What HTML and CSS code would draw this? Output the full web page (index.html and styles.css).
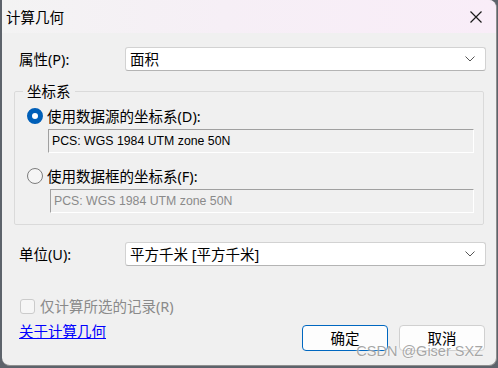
FILE: index.html
```html
<!DOCTYPE html>
<html lang="zh-CN">
<head>
    <meta charset="UTF-8">
    <title>计算几何</title>
    <link rel="stylesheet" href="styles.css">
</head>
<body>

    <div class="window">
        <div class="titlebar">
            <span class="title">计算几何</span>
            <svg class="close" width="12" height="12" viewBox="0 0 12 12">
                <path d="M0.5 0.5 L11.5 11.5 M11.5 0.5 L0.5 11.5" stroke="#1a1a1a" stroke-width="1.2" fill="none"/>
            </svg>
        </div>

        <div class="content">
            <div class="row first">
                <label class="label">属性(P):</label>
                <div class="select">
                    <span>面积</span>
                    <svg class="chevron" width="10" height="6" viewBox="0 0 10 6">
                        <path d="M0.5 0.5 L5 5 L9.5 0.5" stroke="#555" stroke-width="1" fill="none"/>
                    </svg>
                </div>
            </div>

            <fieldset class="group">
                <legend>坐标系</legend>
                <div class="radio-row top">
                    <span class="radio checked"></span>
                    <span>使用数据源的坐标系(D):</span>
                </div>
                <div class="textbox">PCS: WGS 1984 UTM zone 50N</div>

                <div class="radio-row second">
                    <span class="radio"></span>
                    <span>使用数据框的坐标系(F):</span>
                </div>
                <div class="textbox disabled">PCS: WGS 1984 UTM zone 50N</div>
            </fieldset>

            <div class="row units">
                <label class="label">单位(U):</label>
                <div class="select">
                    <span>平方千米 [平方千米]</span>
                    <svg class="chevron" width="10" height="6" viewBox="0 0 10 6">
                        <path d="M0.5 0.5 L5 5 L9.5 0.5" stroke="#555" stroke-width="1" fill="none"/>
                    </svg>
                </div>
            </div>

            <div class="footer">
                <div class="footer-left">
                    <div class="check-row">
                        <span class="checkbox"></span>
                        <span>仅计算所选的记录(R)</span>
                    </div>
                    <a class="link" href="#">关于计算几何</a>
                </div>
                <div class="buttons">
                    <button class="btn primary">确定</button>
                    <button class="btn">取消</button>
                </div>
            </div>
        </div>

        <div class="watermark">CSDN @Giser SXZ</div>
    </div>

</body>
</html>
```

FILE: styles.css
```css
body {
    margin: 0;
    padding: 0;
    background-color: #5d636b;
    font-family: "Noto Sans", "Noto Sans CJK SC", sans-serif;
    font-size: 14.5px;
    color: #000;
}
.window {
    position: relative;
    box-sizing: border-box;
    margin-left: 2px;
    width: 495px;
    height: 366px;
    background-color: #f0f0f0;
    border-right: 1px solid #8f8f8f;
    border-bottom: 1px solid #8f8f8f;
    border-radius: 0 8px 8px 8px;
    overflow: hidden;
}
.titlebar {
    display: flex;
    align-items: center;
    justify-content: space-between;
    height: 33px;
    padding: 0 14px 0 4px;
    background: linear-gradient(90deg, #f3f3f3 0%, #f6eff6 45%, #f9edf8 100%);
}
.title {
    line-height: 20px;
}
.content {
    padding: 0 10px 0 12px;
}
.row {
    display: flex;
    align-items: center;
    margin-left: 5px;
    height: 24px;
}
.row.first {
    margin-top: 14px;
}
.row.units {
    margin-top: 17px;
}
.label {
    width: 106px;
    line-height: 20px;
}
.select {
    flex: 1;
    box-sizing: border-box;
    height: 24px;
    display: flex;
    align-items: center;
    justify-content: space-between;
    padding: 0 10px 0 4px;
    background-color: #fff;
    border: 1px solid #d2d2d2;
    border-bottom-color: #b4b4b4;
    border-radius: 3px;
    line-height: 20px;
}
.group {
    margin: 10px 2px 0 0;
    padding: 0 0 11px 8px;
    border: 1px solid #dadada;
    border-radius: 2px;
}
.group legend {
    padding: 0 4px;
    line-height: 20px;
}
.radio-row {
    display: flex;
    align-items: center;
    height: 20px;
    margin-left: 4px;
    line-height: 20px;
}
.radio-row.top {
    margin-top: 5px;
}
.radio-row.second {
    margin-top: 13px;
}
.radio {
    box-sizing: border-box;
    width: 16px;
    height: 16px;
    margin-right: 4px;
    border-radius: 50%;
    border: 1px solid #7d7d7d;
    background-color: #f5f5f5;
}
.radio.checked {
    border: 5px solid #005fb8;
    background-color: #fff;
}
.textbox {
    box-sizing: border-box;
    height: 24px;
    margin: 3px 9px 0 25px;
    padding: 0 3px;
    border: 1px solid #fff;
    border-top-color: #a0a0a0;
    border-left-color: #a0a0a0;
    font-family: "Liberation Sans", Arial, sans-serif;
    font-size: 12.3px;
    line-height: 22px;
    color: #000;
}
.textbox.disabled {
    margin-left: 27px;
    color: #8a8a8a;
}
.footer {
    display: flex;
    justify-content: space-between;
    align-items: flex-start;
    margin-top: 30px;
    margin-left: 5px;
}
.check-row {
    display: flex;
    align-items: center;
    height: 20px;
    line-height: 20px;
    color: #8a8a8a;
}
.checkbox {
    box-sizing: border-box;
    width: 15px;
    height: 15px;
    margin: 0 5px 0 1px;
    border: 1px solid #cbcbcb;
    border-radius: 3px;
    background-color: #f6f6f6;
}
.link {
    display: block;
    margin-top: 5px;
    line-height: 20px;
    color: #0000ff;
    text-decoration: underline;
}
.buttons {
    display: flex;
    gap: 11px;
    margin-top: 29px;
    margin-right: 1px;
}
.btn {
    box-sizing: border-box;
    width: 86px;
    height: 26px;
    padding: 0;
    background-color: #fdfdfd;
    border: 1px solid #d0d0d0;
    border-radius: 4px;
    font-family: "Noto Sans", "Noto Sans CJK SC", sans-serif;
    font-size: 14.5px;
    line-height: 20px;
    color: #000;
}
.btn.primary {
    border-color: #0067c0;
}
.watermark {
    position: absolute;
    right: 13px;
    bottom: 6px;
    font-family: "Liberation Sans", Arial, sans-serif;
    font-size: 14.5px;
    color: rgba(150, 150, 150, 0.85);
    text-shadow: 0 0 2px #fff;
}
```
